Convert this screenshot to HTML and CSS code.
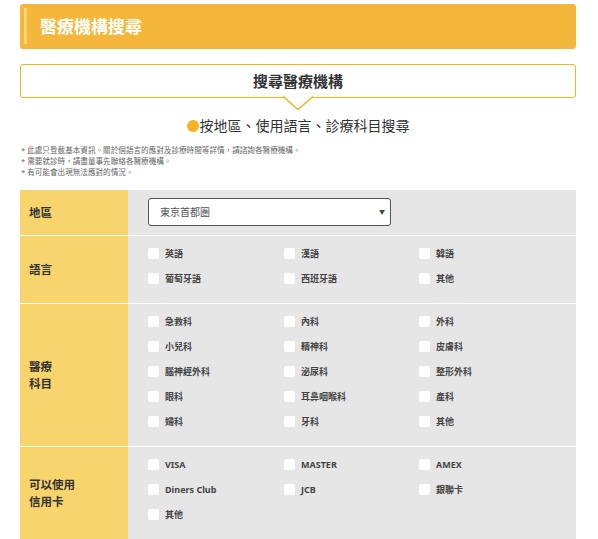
FILE: index.html
```html
<!DOCTYPE html>
<html lang="zh-Hant">
<head>
    <meta charset="UTF-8">
    <title>醫療機構搜尋</title>
    <link rel="stylesheet" href="styles.css">
</head>
<body>
    <div class="page">
        <div class="page-title"><h1>醫療機構搜尋</h1></div>

        <div class="search-box">
            <h2>搜尋醫療機構</h2>
            <svg class="pointer" viewBox="0 0 32 15" width="32" height="15">
                <polygon points="0,0 16,14 32,0" fill="#fff"/>
                <polyline points="1,0.5 16,13.5 31,0.5" fill="none" stroke="#f0b323" stroke-width="1.5"/>
            </svg>
        </div>

        <p class="lead"><span class="dot"></span>按地區、使用語言、診療科目搜尋</p>

        <ul class="notes">
            <li>* 此處只登載基本資訊。關於個語言的應對及診療時間等詳情，請諮詢各醫療機構。</li>
            <li>* 需要就診時，請盡量事先聯絡各醫療機構。</li>
            <li>* 有可能會出現無法應對的情況。</li>
        </ul>

        <div class="form">
            <div class="row">
                <div class="label">地區</div>
                <div class="field field-select">
                    <div class="select">東京首都圏<span class="arrow">▼</span></div>
                </div>
            </div>

            <div class="row">
                <div class="label">語言</div>
                <div class="field options">
                    <label class="opt"><span class="box"></span>英語</label>
                    <label class="opt"><span class="box"></span>漢語</label>
                    <label class="opt"><span class="box"></span>韓語</label>
                    <label class="opt"><span class="box"></span>葡萄牙語</label>
                    <label class="opt"><span class="box"></span>西班牙語</label>
                    <label class="opt"><span class="box"></span>其他</label>
                </div>
            </div>

            <div class="row">
                <div class="label">醫療<br>科目</div>
                <div class="field options">
                    <label class="opt"><span class="box"></span>急救科</label>
                    <label class="opt"><span class="box"></span>內科</label>
                    <label class="opt"><span class="box"></span>外科</label>
                    <label class="opt"><span class="box"></span>小兒科</label>
                    <label class="opt"><span class="box"></span>精神科</label>
                    <label class="opt"><span class="box"></span>皮膚科</label>
                    <label class="opt"><span class="box"></span>腦神經外科</label>
                    <label class="opt"><span class="box"></span>泌尿科</label>
                    <label class="opt"><span class="box"></span>整形外科</label>
                    <label class="opt"><span class="box"></span>眼科</label>
                    <label class="opt"><span class="box"></span>耳鼻咽喉科</label>
                    <label class="opt"><span class="box"></span>產科</label>
                    <label class="opt"><span class="box"></span>婦科</label>
                    <label class="opt"><span class="box"></span>牙科</label>
                    <label class="opt"><span class="box"></span>其他</label>
                </div>
            </div>

            <div class="row">
                <div class="label">可以使用<br>信用卡</div>
                <div class="field options">
                    <label class="opt"><span class="box"></span>VISA</label>
                    <label class="opt"><span class="box"></span>MASTER</label>
                    <label class="opt"><span class="box"></span>AMEX</label>
                    <label class="opt"><span class="box"></span>Diners Club</label>
                    <label class="opt"><span class="box"></span>JCB</label>
                    <label class="opt"><span class="box"></span>銀聯卡</label>
                    <label class="opt"><span class="box"></span>其他</label>
                </div>
            </div>
        </div>
    </div>
</body>
</html>
```

FILE: styles.css
```css
body {
    margin: 0;
    background: #fff;
    color: #333;
    font-family: "Noto Sans", "Noto Sans CJK TC", "Noto Sans CJK JP", sans-serif;
}
.page {
    width: 556px;
    margin-left: 20px;
    padding-top: 4px;
}
.page-title {
    height: 45px;
    background: #f4b73c;
    border-radius: 3px;
    padding: 4px 0 0 4px;
    box-sizing: border-box;
}
.page-title h1 {
    margin: 0;
    height: 36px;
    border-left: 3px solid #f8d27e;
    padding-left: 13px;
    color: #fff;
    font-size: 17px;
    font-weight: bold;
    line-height: 37px;
}
.search-box {
    position: relative;
    margin-top: 15px;
    height: 34px;
    border: 1.5px solid #f0b323;
    border-radius: 3px;
    box-sizing: border-box;
    text-align: center;
}
.search-box h2 {
    margin: 0;
    font-size: 15px;
    line-height: 32px;
    font-weight: bold;
    color: #333;
}
.pointer {
    position: absolute;
    left: 261px;
    top: 31px;
}
.lead {
    margin: 18px 0 0;
    text-align: center;
    font-size: 14px;
    line-height: 20px;
    color: #333;
}
.dot {
    display: inline-block;
    width: 12px;
    height: 12px;
    border-radius: 50%;
    background: #f5b324;
    margin-right: 1px;
    vertical-align: -1px;
}
.notes {
    list-style: none;
    margin: 9px 0 0;
    padding: 0 0 0 1px;
    font-size: 7.6px;
    line-height: 11px;
    color: #666;
}
.form {
    margin-top: 12px;
    background: #e6e6e6;
}
.row {
    display: flex;
    border-top: 1px solid #fff;
}
.row:first-child {
    border-top: none;
}
.label {
    width: 108px;
    flex-shrink: 0;
    background: #f8d46c;
    display: flex;
    align-items: center;
    padding: 0 9px;
    box-sizing: border-box;
    font-size: 11.5px;
    font-weight: bold;
    line-height: 17px;
    color: #333;
}
.field {
    flex: 1;
    padding-left: 20px;
}
.field-select {
    padding-top: 8px;
    padding-bottom: 9px;
}
.select {
    position: relative;
    width: 243px;
    height: 28px;
    box-sizing: border-box;
    border: 1px solid #555;
    border-radius: 3px;
    background: #fff;
    padding-left: 11px;
    font-size: 10px;
    line-height: 26px;
    color: #555;
}
.arrow {
    position: absolute;
    right: 5px;
    top: 0;
    font-size: 6px;
    color: #444;
}
.options {
    display: grid;
    grid-template-columns: 136px 135px 136px;
    grid-auto-rows: 25px;
    padding-top: 5px;
    padding-bottom: 12px;
}
.opt {
    display: flex;
    align-items: center;
    font-size: 9px;
    font-weight: bold;
    color: #444;
}
.box {
    width: 11px;
    height: 11px;
    background: #fff;
    border-radius: 2px;
    margin-right: 6px;
}
```
